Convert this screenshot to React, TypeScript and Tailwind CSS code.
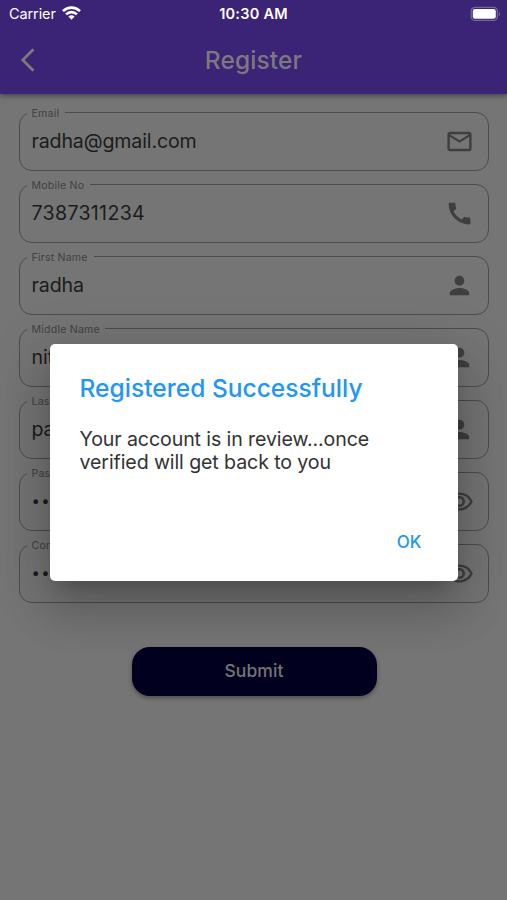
import type { IconType } from "react-icons";
import { MdCall, MdMailOutline, MdOutlineRemoveRedEye, MdPerson } from "react-icons/md";

type Field = { label: string; value: string; icon: IconType; legend: string; text: string };

const FIELDS: Field[] = [
  { label: "Email", value: "radha@gmail.com", icon: MdMailOutline, legend: "w-[38px]", text: "text-[19.6px] tracking-[-0.15px]" },
  { label: "Mobile No", value: "7387311234", icon: MdCall, legend: "w-[63px]", text: "text-[19.6px] tracking-[0.3px]" },
  { label: "First Name", value: "radha", icon: MdPerson, legend: "w-[67px]", text: "text-[19.6px] tracking-[-0.1px]" },
  { label: "Middle Name", value: "nitin", icon: MdPerson, legend: "w-[78px]", text: "text-[19.6px] tracking-[-0.1px]" },
  { label: "Last Name", value: "patil", icon: MdPerson, legend: "w-[66px]", text: "text-[19.6px] tracking-[-0.1px]" },
  { label: "Password", value: "••••••••", icon: MdOutlineRemoveRedEye, legend: "w-[63px]", text: "text-[15px] tracking-[1.3px]" },
  { label: "Confirm Password", value: "••••••••", icon: MdOutlineRemoveRedEye, legend: "w-[106px]", text: "text-[15px] tracking-[1.3px]" },
];

function StatusBar() {
  return (
    <div className="h-7 pl-[9px] pr-[6px] grid grid-cols-3 items-center text-white">
      <div className="flex items-center gap-[6px]">
        <span className="text-[14.5px] leading-none tracking-[-0.1px]">Carrier</span>
        <svg className="-mt-0.5" width="19" height="14" viewBox="0 0 19 14" fill="none" stroke="currentColor" strokeWidth="2.7">
          <path d="M1 5.1a12.2 12.2 0 0 1 17 0" />
          <path d="M4.1 8.4a7.7 7.7 0 0 1 10.8 0" />
          <path d="M9.5 13.7 6.4 10.6a4.4 4.4 0 0 1 6.2 0Z" fill="currentColor" stroke="none" />
        </svg>
      </div>
      <span className="pr-[3px] text-center text-[14.5px] leading-none font-semibold tracking-[0.25px]">10:30 AM</span>
      <svg className="-mt-px justify-self-end" width="31" height="16" viewBox="0 0 31 16" fill="none">
        <rect x="1.2" y="1.4" width="26.2" height="13" rx="4" stroke="#7466a0" strokeWidth="1.3" />
        <rect x="2.8" y="3" width="23" height="9.8" rx="2.3" fill="#fff" />
        <path d="M28.8 5.9c1.8.7 1.8 3.3 0 4Z" fill="#7466a0" />
      </svg>
    </div>
  );
}

function FormField({ field }: { field: Field }) {
  const Icon = field.icon;
  return (
    <fieldset className="h-[66px] min-w-0 px-[7px] rounded-[13px] border border-[#4c4c4c]">
      <legend className={`${field.legend} h-[15px] pt-px pl-[4.5px] text-[10.6px] leading-[15px] tracking-[0.2px] whitespace-nowrap text-[#424242]`}>
        {field.label}
      </legend>
      <div className="h-[42px] pl-[4.5px] pr-[7px] flex items-center justify-between">
        <span className={`${field.text} leading-6 text-[#1c1c1c]`}>{field.value}</span>
        <Icon size={29} className="text-[#3f3f3f]" />
      </div>
    </fieldset>
  );
}

function SuccessDialog() {
  return (
    <div className="absolute inset-0 pt-[344px] flex justify-center items-start">
      <div
        role="dialog"
        className="w-[408px] h-[237px] pt-[29px] px-[30px] flex flex-col rounded-[5px] bg-white shadow-[0_13px_18px_-9px_rgba(0,0,0,0.2),0_29px_46px_4px_rgba(0,0,0,0.14),0_11px_56px_10px_rgba(0,0,0,0.12)]"
      >
        <h2 className="text-[24.5px] leading-[30px] font-[450] tracking-[0.03px] text-[#2196f3]">Registered Successfully</h2>
        <p className="mt-[25px] text-[19.6px] leading-[23px] tracking-[-0.11px] text-[#333]">
          Your account is in review...once
          <br />
          verified will get back to you
        </p>
        <button className="mt-[56px] mr-[6px] self-end text-[17px] leading-6 font-[450] text-[#2196f3]">OK</button>
      </div>
    </div>
  );
}

export default function App() {
  return (
    <div className="relative w-[507px] h-[900px] overflow-hidden bg-[#757575] font-['Inter',sans-serif]">
      <header className="h-[94px] bg-[#3b2376] shadow-[0_2px_5px_rgba(0,0,0,0.4)]">
        <StatusBar />
        <div className="h-[64px] px-5 grid grid-cols-3 items-center text-[#7d7880]">
          <svg width="16" height="24" viewBox="0 0 16 24" fill="none" stroke="currentColor" strokeWidth="2.8">
            <path d="M13.5 1.2 2.8 12l10.7 10.8" />
          </svg>
          <h1 className="text-center text-[24.5px] leading-8 font-[450] tracking-[0.1px]">Register</h1>
        </div>
      </header>

      <main className="pt-[11px] pl-[19px] pr-[18px] flex flex-col">
        <div className="flex flex-col gap-1.5">
          {FIELDS.map((f) => (
            <FormField key={f.label} field={f} />
          ))}
        </div>
        <button className="mt-[44px] w-[245px] h-[49px] self-center rounded-[18px] bg-[#02001f] text-[17.5px] font-[450] tracking-[0.1px] text-[#757575] shadow-[0_2px_4px_rgba(0,0,0,0.35)]">
          Submit
        </button>
      </main>

      <SuccessDialog />
    </div>
  );
}
